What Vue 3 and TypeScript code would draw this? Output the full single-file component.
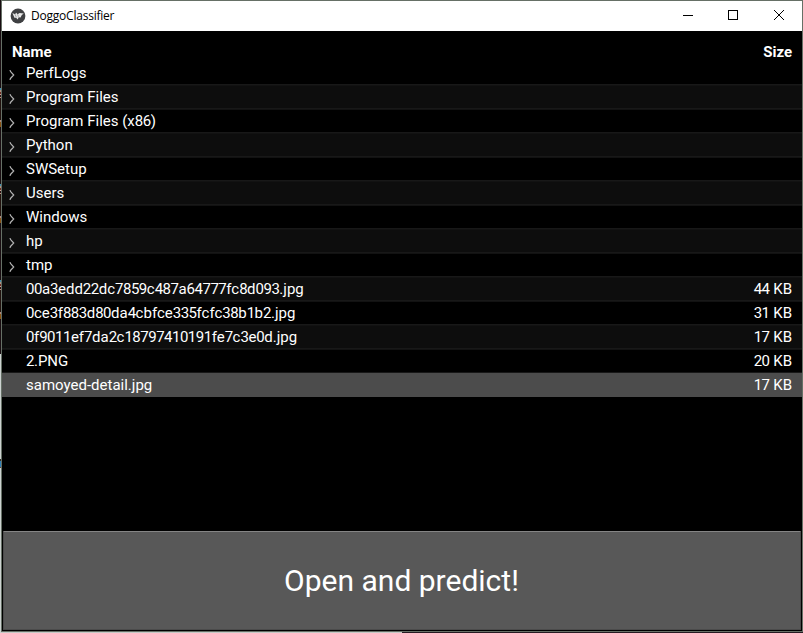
<script setup lang="ts">
interface Entry {
  name: string
  folder?: boolean
  size?: string
  selected?: boolean
}

const entries: Entry[] = [
  { name: 'PerfLogs', folder: true },
  { name: 'Program Files', folder: true },
  { name: 'Program Files (x86)', folder: true },
  { name: 'Python', folder: true },
  { name: 'SWSetup', folder: true },
  { name: 'Users', folder: true },
  { name: 'Windows', folder: true },
  { name: 'hp', folder: true },
  { name: 'tmp', folder: true },
  { name: '00a3edd22dc7859c487a64777fc8d093.jpg', size: '44 KB' },
  { name: '0ce3f883d80da4cbfce335fcfc38b1b2.jpg', size: '31 KB' },
  { name: '0f9011ef7da2c18797410191fe7c3e0d.jpg', size: '17 KB' },
  { name: '2.PNG', size: '20 KB' },
  { name: 'samoyed-detail.jpg', size: '17 KB', selected: true },
]

// Digits are set slightly tighter than letters, so each run is styled on its own.
const runs = (text: string): string[] => text.match(/\d+|\D+/g) ?? []
const isDigits = (run: string): boolean => /^\d/.test(run)
</script>

<template>
  <div class="desktop">
    <div class="window">
      <header class="titlebar">
        <svg class="logo" width="16" height="16" viewBox="0 0 16 16">
          <circle cx="8" cy="8" r="7.4" fill="#3f4042" />
          <path d="M2.4 5L5 6.2L6.2 4.7L7.6 6.2L9.6 5L13.8 5.5L11.8 7.1L10.6 9.6L8.7 9.2L7.7 11.5L6.1 9.7L4.4 9.8Z" fill="#e9e9e9" />
          <path d="M5 6.2L6.3 9.2M7.6 6.2L8.4 8.8" stroke="#77787a" stroke-width="0.6" />
        </svg>
        <span class="caption">DoggoClassifier</span>
        <div class="controls">
          <svg width="46" height="30" viewBox="0 0 46 30"><path d="M18 14.5H28" stroke="#000" shape-rendering="crispEdges" /></svg>
          <svg width="45" height="30" viewBox="0 0 45 30"><rect x="17.5" y="9.5" width="9" height="9" fill="none" stroke="#000" shape-rendering="crispEdges" /></svg>
          <svg width="46" height="30" viewBox="0 0 46 30"><path d="M18 9L28 19M28 9L18 19" stroke="#000" /></svg>
        </div>
      </header>
      <main class="content">
        <div class="head"><span>Name</span><span>Size</span></div>
        <ul class="list">
          <li v-for="e in entries" :key="e.name" class="row" :class="{ selected: e.selected }">
            <span class="toggle">
              <svg v-if="e.folder" width="8" height="12" viewBox="0 0 8 12">
                <path d="M1.9 1.2C2.3 3.2 5 5 5.8 6C5 7 2.3 8.8 1.9 10.8" fill="none" stroke="#b4b4b4" stroke-width="1.2" />
              </svg>
            </span>
            <span class="name"><span v-for="(r, i) in runs(e.name)" :key="i" :class="{ digits: isDigits(r) }">{{ r }}</span></span>
            <span v-if="e.size" class="size"><span v-for="(r, i) in runs(e.size)" :key="i" :class="{ digits: isDigits(r) }">{{ r }}</span></span>
          </li>
        </ul>
        <button class="predict" type="button">Open and predict!</button>
      </main>
    </div>
    <footer class="backdrop"><span class="light"></span><span class="dark"></span></footer>
  </div>
</template>

<style>
body { overflow: hidden; }
</style>

<style scoped>
.desktop {
  box-sizing: border-box;
  width: 803px;
  height: 633px;
  padding-left: 1px;
  display: flex;
  flex-direction: column;
  background: linear-gradient(#180c10 0 88px, #4290b0 88px 90px, #b09080 90px 92px, #702c20 92px 94px, #d0a098 94px 95px, #281010 95px 97px, #c09080 97px 98px, #20100c 98px 120px, #b08878 120px 122px, #8a5210 122px 127px, #180c10 127px 184px, #4290b0 184px 186px, #b09080 186px 188px, #702c20 188px 190px, #d0a098 190px 191px, #281010 191px 193px, #c09080 193px 194px, #20100c 194px 216px, #b08878 216px 218px, #8a5210 218px 223px, #180c10 223px 280px, #4290b0 280px 282px, #b09080 282px 284px, #702c20 284px 286px, #d0a098 286px 287px, #281010 287px 289px, #c09080 289px 290px, #20100c 290px 312px, #b08878 312px 314px, #8a5210 314px 319px, #180c10 319px 354px, #ccd2d0 354px 459px, #303028 459px 461px, #3080b8 461px 467px, #604838 467px 468px, #ccd2d0 468px);
}
.window {
  box-sizing: border-box;
  height: 632px;
  border: 1px solid #667066;
  display: flex;
  flex-direction: column;
  background: #000;
}
.titlebar {
  height: 30px;
  display: flex;
  align-items: center;
  background: #fff;
}
.logo { margin: 0 5px 0 8px; }
.caption {
  font: 12px/16px "Open Sans", sans-serif;
  letter-spacing: -0.22px;
  color: #000;
}
.controls { display: flex; margin-left: auto; }
.content {
  flex: 1;
  display: flex;
  flex-direction: column;
  color: #fff;
  font: 15px/18px Roboto, sans-serif;
}
.head {
  height: 30px;
  box-sizing: border-box;
  padding: 12px 10px 0;
  display: flex;
  justify-content: space-between;
  font-weight: 700;
}
.list { list-style: none; margin: 0; padding: 0; }
.row {
  box-sizing: border-box;
  height: 24px;
  display: flex;
  align-items: center;
  border-bottom: 1px solid #181818;
  box-shadow: inset 0 1px #121212;
}
.row:first-child { box-shadow: none; }
.row:nth-child(even) { background: #0d0d0d; }
.row.selected { background: #4c4c4c; border-color: #4c4c4c; box-shadow: none; }
.toggle { width: 18px; height: 12px; margin: 5px 0 0 6px; display: flex; }
.name, .size { white-space: pre; }
.digits { letter-spacing: -0.5px; }
.size { margin-left: auto; padding-right: 10px; }
.predict {
  height: 99px;
  margin: auto 1px 1px;
  padding: 0 1px 0 0;
  border: 1px solid #4b4b4b;
  border-top-color: #858585;
  border-radius: 1px;
  background: #585858;
  color: #fff;
  font: 30px/36px Roboto, sans-serif;
}
.backdrop { height: 1px; display: flex; }
.light { width: 401px; background: #c7cac7; }
.dark { flex: 1; background: #251b22; }
</style>
